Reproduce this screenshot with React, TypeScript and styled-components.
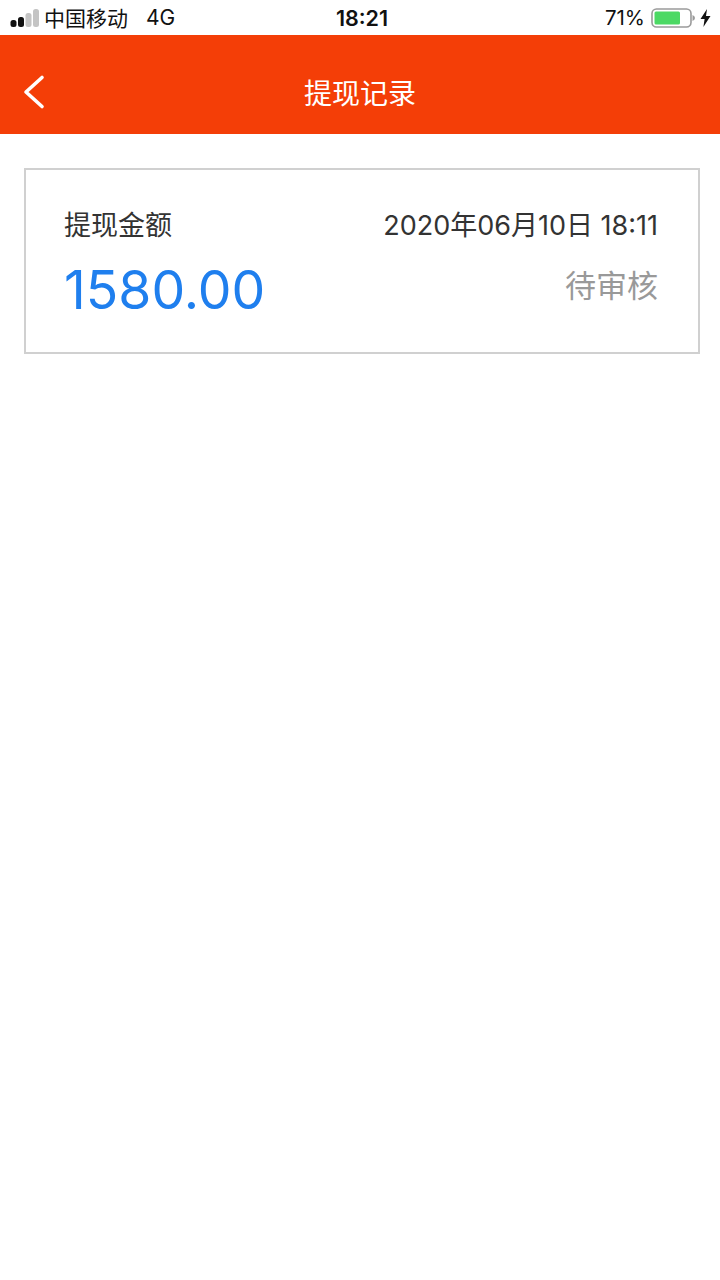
import React from "react";
import styled, { createGlobalStyle } from "styled-components";

const GlobalStyle = createGlobalStyle`
  html, body {
    margin: 0;
    padding: 0;
    background: #fff;
    font-family: "Inter", "Liberation Sans", "Noto Sans CJK SC", sans-serif;
  }
`;

const Page = styled.div`
  width: 720px;
  height: 1280px;
  background: #fff;
  overflow: hidden;
`;

const StatusBar = styled.div`
  height: 35px;
  display: grid;
  grid-template-columns: 1fr auto 1fr;
  align-items: center;
  padding: 0 9px 0 10px;
  box-sizing: border-box;
  color: #111;
  font-size: 21px;
`;

const StatusLeft = styled.div`
  display: flex;
  align-items: center;
`;

const Carrier = styled.span`
  margin-left: 5px;
  font-size: 21px;
  font-family: "Noto Sans CJK SC", sans-serif;
  line-height: 35px;
`;

const Network = styled.span`
  margin-left: 18px;
  font-size: 21px;
`;

const Clock = styled.div`
  font-size: 21.5px;
  font-weight: 600;
  margin-left: 3px;
`;

const StatusRight = styled.div`
  display: flex;
  align-items: center;
  justify-content: flex-end;
`;

const Percent = styled.span`
  font-size: 20.5px;
  margin-right: 6px;
`;

const NavBar = styled.div`
  height: 99px;
  box-sizing: border-box;
  background: #f43e07;
  display: grid;
  grid-template-columns: 1fr auto 1fr;
  align-items: center;
  padding: 15px 22px 0;
`;

const BackButton = styled.div`
  display: flex;
  align-items: center;
`;

const NavTitle = styled.div`
  color: #fff;
  font-size: 28px;
  font-family: "Noto Sans CJK SC", sans-serif;
`;

const Content = styled.div`
  padding: 34px 20px 0 24px;
`;

const RecordCard = styled.div`
  height: 186px;
  box-sizing: border-box;
  border: 2px solid #d0d0d0;
  padding: 32px 40px 0 39px;
`;

const CardRow = styled.div`
  display: flex;
  justify-content: space-between;
  align-items: center;
`;

const Label = styled.div`
  color: #333;
  font-size: 27px;
  line-height: 40px;
  margin-left: -1px;
  font-family: "Noto Sans CJK SC", sans-serif;
`;

const DateText = styled.div`
  color: #333;
  font-size: 27px;
  line-height: 40px;
  margin-top: 4px;
`;

const Amount = styled.div`
  color: #1f7fee;
  font-size: 53.5px;
  line-height: 66px;
  margin-top: 11px;
  margin-left: -1px;
`;

const Status = styled.div`
  color: #999;
  font-size: 31px;
  font-family: "Noto Sans CJK SC", sans-serif;
  margin-top: -3px;
`;

const SignalIcon = () => (
  <svg width="29" height="18" viewBox="0 0 29 18">
    <rect x="0.5" y="11" width="6" height="7" rx="2.5" fill="#111" />
    <rect x="8" y="8" width="6" height="10" rx="2.5" fill="#111" />
    <rect x="15.5" y="4" width="6" height="14" rx="2.5" fill="#c4c4c4" />
    <rect x="23" y="0" width="6" height="18" rx="2.5" fill="#c4c4c4" />
  </svg>
);

const BatteryIcon = () => (
  <svg width="44" height="20" viewBox="0 0 44 20">
    <rect x="1" y="1" width="39" height="18" rx="4.5" fill="none" stroke="#9a9a9a" strokeWidth="1.6" />
    <rect x="3.5" y="3.5" width="25.5" height="13" rx="1.5" fill="#4cd964" />
    <path d="M41.5 7 Q44 8 44 10 Q44 12 41.5 13 Z" fill="#9a9a9a" />
  </svg>
);

const BoltIcon = () => (
  <svg width="11" height="18" viewBox="0 0 11 18" style={{ marginLeft: 5 }}>
    <path d="M7 0 L0.5 10 H4.6 L3.4 18 L10.5 7 H6 Z" fill="#111" />
  </svg>
);

const BackIcon = () => (
  <svg width="24" height="36" viewBox="0 0 24 36">
    <path d="M20 3.5 L4 18 L20 32.5" fill="none" stroke="#fff" strokeWidth="3.6" strokeLinecap="round" strokeLinejoin="round" />
  </svg>
);

export default function App() {
  return (
    <Page>
      <GlobalStyle />
      <StatusBar>
        <StatusLeft>
          <SignalIcon />
          <Carrier>中国移动</Carrier>
          <Network>4G</Network>
        </StatusLeft>
        <Clock>18:21</Clock>
        <StatusRight>
          <Percent>71%</Percent>
          <BatteryIcon />
          <BoltIcon />
        </StatusRight>
      </StatusBar>
      <NavBar>
        <BackButton>
          <BackIcon />
        </BackButton>
        <NavTitle>提现记录</NavTitle>
      </NavBar>
      <Content>
        <RecordCard>
          <CardRow>
            <Label>提现金额</Label>
            <DateText>2020年06月10日 18:11</DateText>
          </CardRow>
          <CardRow>
            <Amount>1580.00</Amount>
            <Status>待审核</Status>
          </CardRow>
        </RecordCard>
      </Content>
    </Page>
  );
}
